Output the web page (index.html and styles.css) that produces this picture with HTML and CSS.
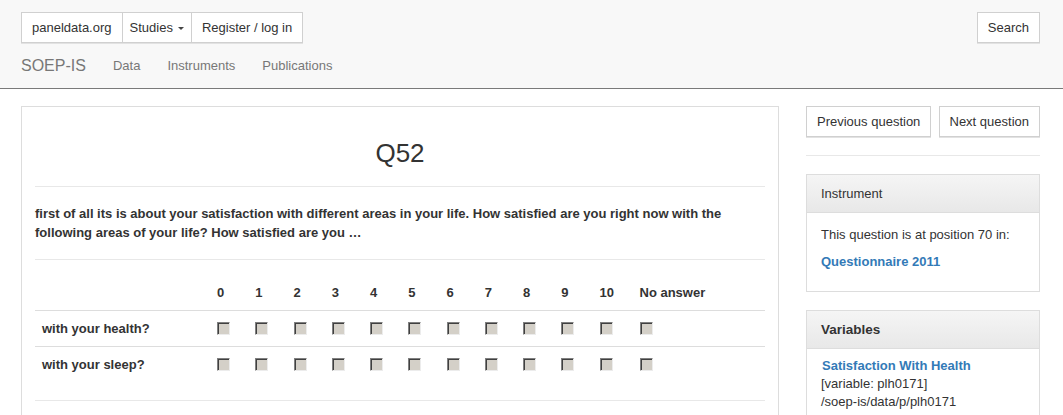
FILE: index.html
```html
<!DOCTYPE html>
<html lang="en">
<head>
<meta charset="utf-8">
<title>Q52 - SOEP-IS</title>
<link rel="stylesheet" href="styles.css">
</head>
<body>
<header class="navbar">
  <div class="nav-top">
    <div class="btn-group">
      <a class="btn" href="#">paneldata.org</a>
      <a class="btn btn-dropdown" href="#">Studies<span class="caret"></span></a>
      <a class="btn" href="#">Register / log in</a>
    </div>
    <a class="btn" href="#">Search</a>
  </div>
  <nav class="nav-bottom">
    <a class="brand" href="#">SOEP-IS</a>
    <a class="nav-link" href="#">Data</a>
    <a class="nav-link" href="#">Instruments</a>
    <a class="nav-link" href="#">Publications</a>
  </nav>
</header>

<div class="layout">
  <main class="question-panel">
    <h1 class="q-title">Q52</h1>
    <hr class="rule">
    <p class="q-text">first of all its is about your satisfaction with different areas in your life. How satisfied are you right now with the following areas of your life? How satisfied are you …</p>
    <hr class="rule">
    <table class="answers">
      <colgroup>
        <col class="c-label">
        <col class="c-num"><col class="c-num"><col class="c-num"><col class="c-num"><col class="c-num">
        <col class="c-num"><col class="c-num"><col class="c-num"><col class="c-num"><col class="c-num">
        <col class="c-ten">
        <col>
      </colgroup>
      <thead>
        <tr>
          <th></th>
          <th>0</th><th>1</th><th>2</th><th>3</th><th>4</th><th>5</th>
          <th>6</th><th>7</th><th>8</th><th>9</th><th>10</th><th>No answer</th>
        </tr>
      </thead>
      <tbody>
        <tr>
          <th class="row-label">with your health?</th>
          <td><span class="cb"></span></td><td><span class="cb"></span></td><td><span class="cb"></span></td>
          <td><span class="cb"></span></td><td><span class="cb"></span></td><td><span class="cb"></span></td>
          <td><span class="cb"></span></td><td><span class="cb"></span></td><td><span class="cb"></span></td>
          <td><span class="cb"></span></td><td><span class="cb"></span></td><td><span class="cb"></span></td>
        </tr>
        <tr>
          <th class="row-label">with your sleep?</th>
          <td><span class="cb"></span></td><td><span class="cb"></span></td><td><span class="cb"></span></td>
          <td><span class="cb"></span></td><td><span class="cb"></span></td><td><span class="cb"></span></td>
          <td><span class="cb"></span></td><td><span class="cb"></span></td><td><span class="cb"></span></td>
          <td><span class="cb"></span></td><td><span class="cb"></span></td><td><span class="cb"></span></td>
        </tr>
      </tbody>
    </table>
    <hr class="rule">
  </main>

  <aside class="sidebar">
    <div class="pager">
      <a class="btn" href="#">Previous question</a>
      <a class="btn" href="#">Next question</a>
    </div>
    <hr class="rule side-rule">
    <section class="panel">
      <div class="panel-heading">Instrument</div>
      <div class="panel-body">
        <p>This question is at position 70 in:</p>
        <p><a class="link" href="#">Questionnaire 2011</a></p>
      </div>
    </section>
    <section class="panel">
      <div class="panel-heading strong">Variables</div>
      <div class="panel-body vars">
        <a class="link var-link" href="#">Satisfaction With Health</a><br>
        [variable: plh0171]<br>
        /soep-is/data/p/plh0171
      </div>
    </section>
  </aside>
</div>
</body>
</html>
```

FILE: styles.css
```css
* { box-sizing: border-box; }

body {
  margin: 0;
  font-family: "Liberation Sans", Arial, sans-serif;
  font-size: 13px;
  line-height: 18px;
  color: #333;
  background: #fff;
}

a { text-decoration: none; color: inherit; }

/* ---------- navbar ---------- */
.navbar {
  background: #f8f8f8;
  border-bottom: 1px solid #7a7a7a;
  padding: 12px 23px 12px 21px;
}

.nav-top {
  display: flex;
  justify-content: space-between;
  align-items: flex-start;
}

.btn-group { display: flex; }
.btn-group .btn + .btn { margin-left: -1px; }

.btn {
  display: inline-block;
  background: #fff;
  border: 1px solid #d0d0d0;
  box-shadow: 0 1px 0 #e2e2e2;
  padding: 6px 10px;
  line-height: 17px;
  color: #333;
  white-space: nowrap;
}

.btn-dropdown { padding: 6px 7px; }

.caret {
  display: inline-block;
  width: 0;
  height: 0;
  margin-left: 5px;
  vertical-align: middle;
  border-top: 3px solid #444;
  border-left: 3px solid transparent;
  border-right: 3px solid transparent;
}

.nav-bottom {
  display: flex;
  align-items: center;
  gap: 27px;
  height: 20px;
  margin-top: 13px;
}

.brand {
  font-size: 16px;
  color: #777;
}

.nav-link { color: #777; }

/* ---------- layout ---------- */
.layout {
  display: flex;
  gap: 27px;
  padding: 17px 23px 0 21px;
}

.question-panel {
  flex: 0 0 758px;
  border: 1px solid #ddd;
  padding: 0 13px;
}

.sidebar { flex: 1 1 auto; min-width: 0; }

.rule {
  border: 0;
  border-top: 1px solid #e8e8e8;
  margin: 0;
}

.q-title {
  margin: 32px 0 18px;
  font-size: 26px;
  line-height: 29px;
  font-weight: normal;
  text-align: center;
}

.q-text {
  margin: 18px 0 17px;
  font-weight: bold;
  line-height: 18.5px;
}

/* ---------- table ---------- */
.answers {
  width: 100%;
  table-layout: fixed;
  border-collapse: collapse;
  margin: 15px 0 18px;
}

.c-label { width: 174px; }
.c-num { width: 38.25px; }
.c-ten { width: 40px; }

.answers th,
.answers td {
  padding: 8px;
  line-height: 19px;
  text-align: left;
  vertical-align: middle;
  font-weight: bold;
  white-space: nowrap;
}

.answers thead th { border-bottom: 1px solid #ddd; }
.answers tbody tr + tr th,
.answers tbody tr + tr td { border-top: 1px solid #ddd; }

.row-label { padding-left: 7px !important; }

.cb {
  display: inline-block;
  width: 13px;
  height: 13px;
  vertical-align: middle;
  background: #d4d0c8;
  border-top: 1px solid #808080;
  border-left: 1px solid #808080;
  border-right: 1px solid #ececec;
  border-bottom: 1px solid #ececec;
  box-shadow: inset 1px 1px 0 #404040;
  position: relative;
  top: -1px;
}

/* ---------- sidebar ---------- */
.pager {
  display: flex;
  justify-content: space-between;
}

.side-rule { margin: 18px 0; }

.panel {
  border: 1px solid #ddd;
  margin-bottom: 18px;
}

.panel-heading {
  background: linear-gradient(#f5f5f5, #e8e8e8);
  border-bottom: 1px solid #ddd;
  padding: 10px 14px;
  line-height: 17px;
}

.panel-heading.strong { font-weight: bold; font-size: 13.5px; }

.panel-body { padding: 13px 14px 11px; }

.panel-body p { margin: 0 0 9px; }

.link { color: #337ab7; font-weight: bold; }

.vars { padding: 8px 14px 10px; }

.var-link { margin-left: 1px; }
```
